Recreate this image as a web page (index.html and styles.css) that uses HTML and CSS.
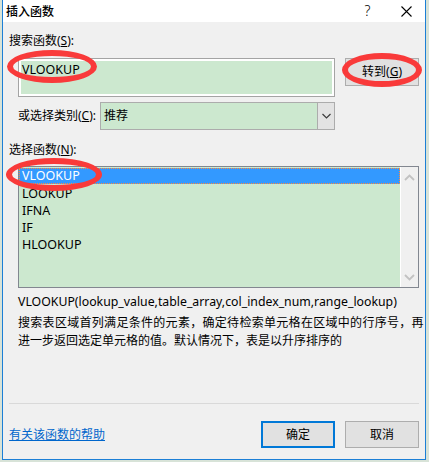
FILE: index.html
```html
<!DOCTYPE html>
<html lang="zh-CN">
<head>
<meta charset="utf-8">
<title>插入函数</title>
<link rel="stylesheet" href="styles.css">
</head>
<body>
<div class="dialog">
  <div class="titlebar">
    <span class="title">插入函数</span>
    <span class="help">?</span>
    <svg class="close" width="11" height="11" viewBox="0 0 11 11"><path d="M0.5 0.5 L10.5 10.5 M10.5 0.5 L0.5 10.5" stroke="#000" stroke-width="1.1" fill="none"/></svg>
  </div>
  <div class="body">
    <div class="label label-search">搜索函数(<u>S</u>):</div>
    <div class="search-row">
      <div class="textbox"><div class="field">VLOOKUP</div></div>
      <div class="btn btn-go">转到(<u>G</u>)</div>
    </div>
    <div class="cat-row">
      <span class="cat-label">或选择类别(<u>C</u>):</span>
      <div class="select">
        <span class="sel-text">推荐</span>
        <span class="sel-arrow"><svg width="9" height="6" viewBox="0 0 9 6"><path d="M0.5 1 L4.5 5 L8.5 1" stroke="#3c3c3c" stroke-width="1.2" fill="none"/></svg></span>
      </div>
    </div>
    <div class="label label-list">选择函数(<u>N</u>):</div>
    <div class="listbox">
      <ul class="items">
        <li class="selected">VLOOKUP</li>
        <li>LOOKUP</li>
        <li>IFNA</li>
        <li>IF</li>
        <li>HLOOKUP</li>
      </ul>
      <div class="scrollbar">
        <svg width="11" height="7" viewBox="0 0 11 7"><path d="M1 6 L5.5 1.5 L10 6" stroke="#c2c2c2" stroke-width="1.8" fill="none"/></svg>
        <svg width="11" height="7" viewBox="0 0 11 7"><path d="M1 1 L5.5 5.5 L10 1" stroke="#c2c2c2" stroke-width="1.8" fill="none"/></svg>
      </div>
    </div>
    <div class="signature">VLOOKUP(lookup_value,table_array,col_index_num,range_lookup)</div>
    <div class="desc">
      <div class="desc-line first">搜索表区域首列满足条件的元素，确定待检索单元格在区域中的行序号，再</div>
      <div class="desc-line">进一步返回选定单元格的值。默认情况下，表是以升序排序的</div>
    </div>
    <div class="sep"></div>
    <div class="footer">
      <a class="help-link" href="#">有关该函数的帮助</a>
      <div class="buttons">
        <div class="btn btn-ok">确定</div>
        <div class="btn">取消</div>
      </div>
    </div>
  </div>
  <div class="mark mark-search"></div>
  <div class="mark mark-go"></div>
  <div class="mark mark-list"></div>
</div>
</body>
</html>
```

FILE: styles.css
```css
html, body {
  margin: 0;
  padding: 0;
}
body {
  width: 429px;
  height: 462px;
  overflow: hidden;
  background: #d8e3d8;
  font-family: "Noto Sans", "Noto Sans CJK SC", sans-serif;
  font-size: 12px;
  color: #000;
}
.dialog {
  position: relative;
  margin-left: 2px;
  width: 422px;
  height: 459px;
  border: 1px solid #1c7fd6;
  border-top: none;
  background: #f0f0f0;
  display: flex;
  flex-direction: column;
}
.titlebar {
  height: 22px;
  background: #fff;
  display: flex;
  align-items: center;
  padding: 0 13px 0 3px;
}
.title {
  font-family: "Noto Sans CJK SC", sans-serif;
  font-size: 12px;
  font-weight: 500;
  line-height: 22px;
}
.help {
  margin-left: auto;
  width: 11px;
  text-align: center;
  font-size: 14px;
  font-weight: 300;
  line-height: 22px;
}
.close {
  margin-left: 28px;
  display: block;
}
.body {
  padding: 0 6px;
  display: flex;
  flex-direction: column;
}
.label {
  height: 16px;
  line-height: 16px;
}
.label-search {
  margin-top: 11px;
}
.search-row {
  margin-top: 9px;
  margin-left: 9px;
  display: flex;
  align-items: flex-start;
  gap: 10px;
}
.textbox {
  width: 317px;
  height: 39px;
  box-sizing: border-box;
  border: 1px solid #a4a4a4;
  padding: 2px;
  background: #fff;
}
.field {
  height: 100%;
  background: #cce8cf;
  font-size: 12.5px;
  line-height: 16px;
  padding-left: 1px;
  padding-top: 1px;
  box-sizing: border-box;
}
.btn {
  width: 74px;
  height: 28px;
  box-sizing: border-box;
  border: 1px solid #adadad;
  background: #e1e1e1;
  display: flex;
  align-items: center;
  justify-content: center;
  line-height: 16px;
}
.cat-row {
  margin-top: 5px;
  margin-left: 9px;
  height: 28px;
  display: flex;
  align-items: center;
}
.cat-label {
  width: 82px;
  line-height: 16px;
}
.select {
  width: 235px;
  height: 28px;
  box-sizing: border-box;
  border: 1px solid #acacac;
  background: #cce8cf;
  display: flex;
  align-items: stretch;
}
.sel-text {
  flex: 1;
  line-height: 26px;
  padding-left: 3px;
}
.sel-arrow {
  width: 17px;
  box-sizing: border-box;
  border-left: 1px solid #acacac;
  background: #e3e3e3;
  display: flex;
  align-items: center;
  justify-content: center;
}
.sel-arrow svg {
  display: block;
}
.label-list {
  margin-top: 12px;
}
.listbox {
  margin-top: 8px;
  margin-left: 9px;
  width: 401px;
  height: 122px;
  box-sizing: border-box;
  border: 1px solid #828790;
  display: flex;
}
.items {
  list-style: none;
  margin: 0;
  padding: 1px 0 0 0;
  flex: 1;
  background: #cce8cf;
  border-right: 1px solid #fff;
  font-size: 12.5px;
}
.items li {
  height: 17px;
  line-height: 17px;
  padding-left: 3px;
  box-sizing: border-box;
}
.items li.selected {
  height: 16px;
  line-height: 14px;
  margin-bottom: 1px;
  padding-left: 2px;
  background: #3399ff;
  color: #fff;
  border: 1px dotted #ff8a3d;
}
.scrollbar {
  width: 17px;
  background: #f0f0f0;
  display: flex;
  flex-direction: column;
  align-items: center;
  justify-content: space-between;
  padding: 7px 0 6px;
  box-sizing: border-box;
}
.scrollbar svg {
  display: block;
}
.signature {
  margin-top: 6px;
  margin-left: 9px;
  font-size: 12.3px;
  line-height: 16px;
  white-space: nowrap;
}
.desc {
  margin-top: 4px;
  margin-left: 9px;
}
.desc-line {
  line-height: 18px;
  white-space: nowrap;
}
.desc-line.first {
  letter-spacing: 0.3px;
}
.sep {
  margin-top: 53px;
  height: 1px;
  background: #d9d9d9;
}
.footer {
  margin-top: 17px;
  display: flex;
  align-items: center;
  height: 27px;
}
.help-link {
  color: #0066cc;
  text-decoration: underline;
  line-height: 16px;
}
.buttons {
  margin-left: auto;
  display: flex;
  gap: 10px;
}
.buttons .btn {
  height: 27px;
}
.btn-ok {
  border: 2px solid #0078d7;
}
.mark {
  position: absolute;
  border: 6px solid #f93a3a;
  border-radius: 50%;
  box-sizing: border-box;
}
.mark-search {
  left: 4px;
  top: 50px;
  width: 90px;
  height: 33px;
}
.mark-go {
  left: 339px;
  top: 53px;
  width: 80px;
  height: 34px;
}
.mark-list {
  left: 3px;
  top: 158px;
  width: 96px;
  height: 33px;
}
```
